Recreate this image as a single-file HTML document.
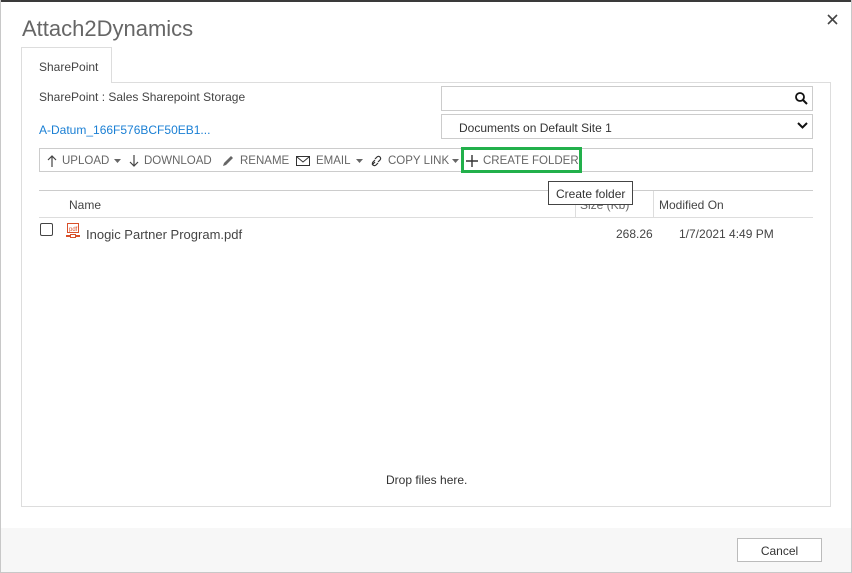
<!DOCTYPE html>
<html><head><style>
*{box-sizing:border-box;margin:0;padding:0}
body{width:852px;height:573px;position:relative;background:#fff;font-family:"Liberation Sans",sans-serif;color:#333;overflow:hidden;font-size:12px}
.a{position:absolute;white-space:nowrap}
.t{color:#666;font-size:11.5px;top:155px}
.c{font-size:7px;color:#666}
</style></head><body>
<div class="a" style="left:0;top:0;width:852px;height:2px;background:#3a3a3a"></div>
<div class="a" style="left:0;top:0;width:852px;height:573px;border:1px solid #c8c8c8;border-top:none"></div>
<div class="a" style="left:22px;top:16px;font-size:22px;color:#666">Attach2Dynamics</div>
<svg class="a" style="left:827px;top:14px" width="11" height="11"><path d="M1 1l9 9M10 1l-9 9" stroke="#444" stroke-width="1.6"/></svg>
<div class="a" style="left:21px;top:47px;width:91px;height:36px;border:1px solid #ddd;border-bottom:none;background:#fff;z-index:2;padding:12px 0 0 17px;color:#444">SharePoint</div>
<div class="a" style="left:21px;top:82px;width:810px;height:425px;border:1px solid #ddd"></div>
<div class="a" style="left:39px;top:90px;color:#444">SharePoint : Sales Sharepoint Storage</div>
<div class="a" style="left:39px;top:123px;color:#1a7fd4">A-Datum_166F576BCF50EB1...</div>
<div class="a" style="left:441px;top:86px;width:372px;height:25px;border:1px solid #ccc"></div>
<svg class="a" style="left:795px;top:92px" width="13" height="13"><circle cx="5" cy="5" r="4" fill="none" stroke="#111" stroke-width="1.8"/><path d="M8 8l4 4" stroke="#111" stroke-width="2"/></svg>
<div class="a" style="left:441px;top:114px;width:372px;height:25px;border:1px solid #ccc;padding:6px 0 0 17px;color:#333">Documents on Default Site 1</div>
<svg class="a" style="left:797px;top:122px" width="11" height="8"><path d="M1 1l4.5 4.5L10 1" fill="none" stroke="#111" stroke-width="2"/></svg>
<div class="a" style="left:39px;top:148px;width:774px;height:24px;border:1px solid #ccc"></div>
<svg class="a" style="left:47px;top:155px" width="10" height="12"><path d="M5 12V1M1 5l4-4 4 4" fill="none" stroke="#444" stroke-width="1.2"/></svg>
<div class="a t" style="left:62px">UPLOAD</div>
<svg class="a" style="left:114px;top:159px" width="7" height="4"><path d="M0 0h7L3.5 4z" fill="#666"/></svg>
<svg class="a" style="left:129px;top:155px" width="10" height="12"><path d="M5 0v11M1 7l4 4 4-4" fill="none" stroke="#444" stroke-width="1.2"/></svg>
<div class="a t" style="left:144px">DOWNLOAD</div>
<svg class="a" style="left:222px;top:155px" width="12" height="12"><path d="M1 11l1-3 7-7 2 2-7 7z" fill="#666"/></svg>
<div class="a t" style="left:240px">RENAME</div>
<svg class="a" style="left:296px;top:156px" width="14" height="10"><rect x=".5" y=".5" width="13" height="9" fill="none" stroke="#333"/><path d="M1 1l6 5 6-5" fill="none" stroke="#333"/></svg>
<div class="a t" style="left:316px">EMAIL</div>
<svg class="a" style="left:356px;top:159px" width="7" height="4"><path d="M0 0h7L3.5 4z" fill="#666"/></svg>
<svg class="a" style="left:370px;top:155px" width="13" height="12"><path d="M2 10l3-3M5 4l2-2a2 2 0 0 1 3 3l-2 2M8 8l-2 2a2 2 0 0 1-3-3l2-2" fill="none" stroke="#333" stroke-width="1.2"/></svg>
<div class="a t" style="left:388px">COPY LINK</div>
<svg class="a" style="left:452px;top:159px" width="7" height="4"><path d="M0 0h7L3.5 4z" fill="#666"/></svg>
<div class="a" style="left:461px;top:147px;width:121px;height:26px;border:3px solid #22b04b"></div>
<svg class="a" style="left:466px;top:155px" width="12" height="12"><path d="M6 0v12M0 6h12" stroke="#333" stroke-width="1.4"/></svg>
<div class="a t" style="left:483px">CREATE FOLDER</div>
<div class="a" style="left:39px;top:190px;width:774px;height:1px;background:#ccc"></div>
<div class="a" style="left:39px;top:217px;width:774px;height:1px;background:#ddd"></div>
<div class="a" style="left:575px;top:191px;width:1px;height:26px;background:#ddd"></div>
<div class="a" style="left:653px;top:191px;width:1px;height:26px;background:#ddd"></div>
<div class="a" style="left:69px;top:198px;color:#444">Name</div>
<div class="a" style="left:580px;top:198px;color:#666">Size (Kb)</div>
<div class="a" style="left:659px;top:198px;color:#444">Modified On</div>
<div class="a" style="left:548px;top:181px;width:85px;height:24px;border:1px solid #444;background:#fff;padding:5px 0 0 7px;color:#333">Create folder</div>
<div class="a" style="left:40px;top:223px;width:13px;height:13px;border:1px solid #444;border-radius:2px"></div>
<svg class="a" style="left:66px;top:223px" width="14" height="16"><rect x="1.5" y=".5" width="11" height="9" fill="none" stroke="#d9502a"/><text x="3" y="8" font-size="6" fill="#d9502a" font-family="Liberation Sans">pdf</text><path d="M0 13h4M10 13h4" stroke="#d9502a" stroke-width="2"/><rect x="4.5" y="11.5" width="5" height="3" fill="none" stroke="#d9502a"/></svg>
<div class="a" style="left:86px;top:227px;color:#444;font-size:13px">Inogic Partner Program.pdf</div>
<div class="a" style="left:616px;top:227px;color:#444">268.26</div>
<div class="a" style="left:679px;top:227px;color:#444">1/7/2021 4:49 PM</div>
<div class="a" style="left:386px;top:473px;color:#333">Drop files here.</div>
<div class="a" style="left:1px;top:528px;width:850px;height:44px;background:#f7f7f7"></div>
<div class="a" style="left:737px;top:538px;width:85px;height:24px;border:1px solid #bbb;background:#fff;text-align:center;padding-top:5px;color:#333">Cancel</div>
</body></html>
